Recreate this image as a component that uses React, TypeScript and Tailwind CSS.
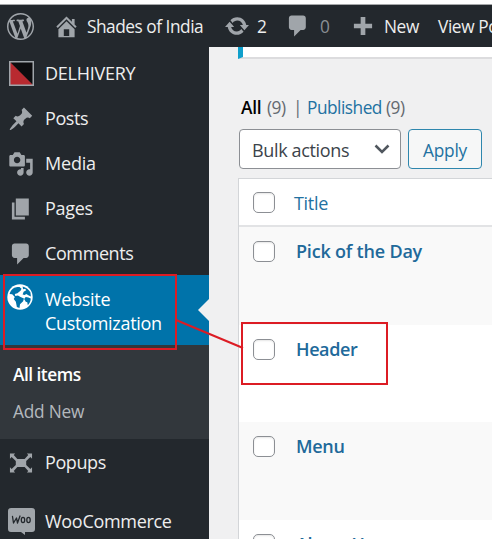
import React from 'react';

const icons = {
  wordpress:
    'M20 10c0-5.51-4.49-10-10-10C4.48 0 0 4.49 0 10c0 5.52 4.48 10 10 10 5.51 0 10-4.48 10-10zM7.78 15.37L4.37 6.22c.55-.02 1.17-.08 1.17-.08.5-.06.44-1.13-.06-1.11 0 0-1.45.11-2.37.11-.18 0-.37 0-.58-.01C4.12 2.69 6.87 1.11 10 1.11c2.33 0 4.45.87 6.05 2.34-.68-.11-1.65.39-1.65 1.58 0 .74.45 1.36.9 2.1.35.61.55 1.36.55 2.46 0 1.49-1.4 5-1.4 5l-3.03-8.37c.54-.02.82-.17.82-.17.5-.05.44-1.25-.06-1.22 0 0-1.44.12-2.38.12-.87 0-2.33-.12-2.33-.12-.5-.03-.56 1.2-.06 1.22l.92.08 1.26 3.41zM17.41 10c.24-.64.74-1.87.43-4.25.7 1.29 1.05 2.71 1.05 4.25 0 3.29-1.73 6.24-4.4 7.78.97-2.59 1.94-5.2 2.92-7.78zM6.1 18.09C3.12 16.65 1.11 13.53 1.11 10c0-1.3.23-2.48.72-3.59C3.25 10.3 4.67 14.2 6.1 18.09zm4.03-6.63l2.58 6.98c-.86.29-1.76.45-2.71.45-.79 0-1.57-.11-2.29-.33.81-2.38 1.62-4.74 2.42-7.1z',
  home: 'M16 8.5l1.53 1.53-1.06 1.06L10 4.6l-6.47 6.49-1.06-1.06L10 2.5l4 4v-2h2v4zm-6-2.46l6 5.99V18H4v-5.97zM12 17v-5H8v5h4z',
  update:
    'M10.2 3.28c3.53 0 6.43 2.61 6.92 6h2.08l-3.5 4-3.5-4h2.32c-.45-1.97-2.21-3.45-4.32-3.45-1.45 0-2.73.71-3.54 1.78L4.95 5.66C6.23 4.2 8.11 3.28 10.2 3.28zm-.4 13.44c-3.52 0-6.43-2.61-6.92-6H.8l3.5-4c1.17 1.33 2.33 2.67 3.5 4H5.48c.45 1.97 2.21 3.45 4.32 3.45 1.45 0 2.73-.71 3.54-1.78l1.71 1.95c-1.28 1.46-3.15 2.38-5.25 2.38z',
  comments: 'M5 2h9c1.1 0 2 .9 2 2v7c0 1.1-.9 2-2 2h-2l-5 5v-5H5c-1.1 0-2-.9-2-2V4c0-1.1.9-2 2-2z',
  plus: 'M8.2 3h3.6v5.2H17v3.6h-5.2V17H8.2v-5.2H3V8.2h5.2z',
  post: 'M10.44 3.02l1.82-1.82 6.36 6.35-1.83 1.82c-1.05-.68-2.48-.57-3.41.36l-.75.75c-.92.93-1.04 2.35-.35 3.41l-1.83 1.82-2.41-2.41-2.8 2.79c-.42.42-3.38 2.71-3.8 2.29s1.86-3.39 2.28-3.81l2.79-2.79L4.1 9.36l1.83-1.82c1.05.69 2.48.57 3.4-.36l.75-.75c.93-.92 1.05-2.35.36-3.41z',
  media:
    'M13 11V4c0-.55-.45-1-1-1h-1.67L9 1H5L3.67 3H2c-.55 0-1 .45-1 1v7c0 .55.45 1 1 1h10c.55 0 1-.45 1-1zM7 4.5c1.38 0 2.5 1.12 2.5 2.5S8.38 9.5 7 9.5 4.5 8.38 4.5 7 5.62 4.5 7 4.5zM14 6h5v10.5c0 1.38-1.12 2.5-2.5 2.5S14 17.88 14 16.5s1.12-2.5 2.5-2.5c.17 0 .34.02.5.05V9h-3V6zm-4 8.05V13h2v3.5c0 1.38-1.12 2.5-2.5 2.5S7 17.88 7 16.5 8.12 14 9.5 14c.17 0 .34.02.5.05z',
  page: 'M6 15V2h10v13H6zm-1 1h8v2H3V5h2v11z',
  popup:
    'M1.500 2.700h4L4.400 3.900 7.200 7h5.600l2.800-3.100L14.500 2.700h4v4l-1.300-1.300L14 8.500v3l3.200 3.100 1.300-1.300v4h-4l1.100-1.200L12.800 13H7.200l-2.800 3.100 1.100 1.200h-4v-4l1.300 1.300L6 11.500v-3L2.800 5.400 1.500 6.700z',
};

function Icon({ name, className = '' }: { name: keyof typeof icons; className?: string }) {
  return (
    <svg viewBox="0 0 20 20" className={`size-[26px] shrink-0 fill-[#a0a5aa] ${className}`}>
      <path d={icons[name]} />
    </svg>
  );
}

function MenuItem({ icon, label, track = '' }: { icon: React.ReactNode; label: string; track?: string }) {
  return (
    <li className="flex h-[45px] items-center">
      <span className="flex w-[45px] shrink-0 pl-[8px]">{icon}</span>
      <span className={track}>{label}</span>
    </li>
  );
}

function Check() {
  return (
    <span className="ml-[14px] block h-[21px] w-[22px] shrink-0 rounded-[5px] border border-[#8c8f94] bg-white shadow-[inset_0_1px_2px_rgba(0,0,0,0.1)]" />
  );
}

function Row({ title, track, alt }: { title: string; track: string; alt?: boolean }) {
  return (
    <div className={`flex h-[97.7px] shrink-0 items-start pt-[14px] ${alt ? 'bg-[#f9f9f9]' : 'bg-white'}`}>
      <Check />
      <span className={`ml-[21px] -mt-[2px] text-[18px] leading-[24px] font-semibold text-[#21699a] ${track}`}>
        {title}
      </span>
    </div>
  );
}

export default function App() {
  return (
    <div className="relative flex h-[539px] w-[492px] flex-col overflow-hidden bg-white pt-[4px] font-['Open_Sans','Noto_Sans',sans-serif] whitespace-nowrap">
      <header className="flex h-[43px] shrink-0 items-center border-t border-[#a5a7a9] bg-[#23282d] text-[17.3px] text-[#eee]">
        <Icon name="wordpress" className="ml-[7px] size-[27px]" />
        <Icon name="home" className="ml-[19px] size-[27px]" />
        <span className="ml-[7px] w-[137px] shrink-0 pt-[1px] tracking-[-0.48px]">Shades of India</span>
        <Icon name="update" />
        <span className="ml-[7px] w-[28px] shrink-0 pt-[1px]">2</span>
        <Icon name="comments" />
        <span className="ml-[9px] w-[30px] shrink-0 pt-[1px] text-[#8a8f94]">0</span>
        <Icon name="plus" />
        <span className="ml-[8px] w-[54px] shrink-0 pt-[1px] tracking-[-0.4px]">New</span>
        <span className="shrink-0 pt-[1px] tracking-[-0.4px]">View Posts</span>
      </header>
      <div className="flex min-h-0 flex-1">
        <nav className="w-[209px] shrink-0 bg-[#23282d] pt-[4px] text-[18px] text-[#eee]">
          <ul>
            <MenuItem
              label="DELHIVERY"
              track="tracking-[-0.25px]"
              icon={
                <svg viewBox="0 0 25 25" className="ml-[1px] size-[25px]">
                  <path d="M0 0h25v25z" fill="#0c0c0e" />
                  <path d="M0 0v25h25z" fill="#b82a30" />
                  <path d="M.75.75h23.5v23.5H.75z" fill="none" stroke="#a0a5aa" strokeWidth="1.5" />
                </svg>
              }
            />
            <MenuItem label="Posts" track="tracking-[-0.4px]" icon={<Icon name="post" />} />
            <MenuItem label="Media" track="tracking-[-0.2px]" icon={<Icon name="media" />} />
            <MenuItem label="Pages" track="tracking-[-0.3px]" icon={<Icon name="page" />} />
            <MenuItem label="Comments" track="tracking-[-0.4px]" icon={<Icon name="comments" />} />
            <li className="-mt-px flex h-[70px] items-start justify-between bg-[#0073aa] text-white">
              <span className="flex">
                <span className="w-[45px] pt-[9px] pl-[7px]">
                  <svg viewBox="0 0 25 25" className="size-[26px]">
                    <circle cx="12.5" cy="12.5" r="12.2" fill="#fff" />
                    <path
                      d="M7 3.500C4.500 5 3 7 2.500 9.500l2.500.3 2.500 2.700-1 2 2 2.500 1 5 2.500 1 .5-3.500 3-3 .8-2.500-3.300-1.500-2.500-1.500-2.500.5-.5-2 2.500-.5 3-2.500 1-2-2-1.500L10 3zM15 2.500l.5 2.500 2-.5 1 1.500-2.500 1.500-1 2.500 2 .5 1.500-1 2.500 1.500 2 1-.5-4C21 5.500 18.500 3.500 15 2.500zM18 12.500l-1.500 2 1.500 2.500 1.500.5.500 3c1.700-1.800 2.700-4 2.900-6.500l-2.400-1z"
                      fill="#0073aa"
                    />
                  </svg>
                </span>
                <span className="pt-[12px] leading-[24px] tracking-[-0.3px]">
                  Website
                  <br />
                  Customization
                </span>
              </span>
              <svg viewBox="0 0 11 22" className="mt-[24px] h-[22px] w-[11px] fill-[#f0f0f1]">
                <path d="M11 0v22L0 11z" />
              </svg>
            </li>
          </ul>
          <ul className="h-[94px] bg-[#32373c] pt-[11px] pl-[13px] text-[17.3px] leading-[37px]">
            <li className="font-semibold tracking-[-0.5px] text-white">All items</li>
            <li className="tracking-[-0.2px] text-[#b4b9be]">Add New</li>
          </ul>
          <ul className="pt-[1px]">
            <MenuItem label="Popups" track="tracking-[-0.4px]" icon={<Icon name="popup" />} />
            <li className="h-[14px]" />
            <MenuItem
              label="WooCommerce"
              track="tracking-[-0.3px]"
              icon={
                <svg viewBox="0 0 27 27" className="size-[27px]">
                  <path d="M3 0h21q3 0 3 3v18q0 3-3 3h-7v3l-4-3H3q-3 0-3-3V3q0-3 3-3z" fill="#a0a5aa" />
                  <g fill="none" stroke="#23282d" strokeWidth="1.3" strokeLinecap="round" strokeLinejoin="round">
                    <path d="M4.500 8.500l1 6.500 3-5 1 5 2.500-7" />
                    <ellipse cx="15" cy="12" rx="1.7" ry="2.6" />
                    <ellipse cx="20.500" cy="12" rx="1.7" ry="2.6" />
                  </g>
                </svg>
              }
            />
          </ul>
        </nav>
        <main className="flex min-w-0 flex-1 flex-col bg-[#f0f0f1] pl-[29px] text-[18px]">
          <div className="h-[12px] shrink-0 border-b-2 border-l-[5px] border-b-[#dcdcde] border-l-[#0f9fcb] bg-white" />
          <div className="mt-[37px] flex h-[24px] shrink-0 items-center pl-[3px] text-[17.3px] text-[#646970]">
            <span className="w-[26px] font-semibold tracking-[-0.2px] text-black">All</span>
            <span className="w-[26px] tracking-[-0.5px]">(9)</span>
            <span className="w-[14px]">|</span>
            <span className="w-[79px] tracking-[-0.5px] text-[#2271a1]">Published</span>
            <span className="tracking-[-0.5px]">(9)</span>
          </div>
          <div className="mt-[9px] flex h-[40px] shrink-0 gap-[7px] pl-[1px]">
            <div className="flex w-[162px] items-center justify-between rounded-[4px] border border-[#8c8f94] bg-white pr-[10px] pl-[12px] text-[#3c434a]">
              <span className="pt-[2px] tracking-[-0.35px]">Bulk actions</span>
              <svg viewBox="0 0 16 10" className="h-[10px] w-[16px]">
                <path d="M1.500 1.500L8 8l6.500-6.500" fill="none" stroke="#50575e" strokeWidth="2.500" />
              </svg>
            </div>
            <div className="flex w-[74px] items-center justify-center rounded-[4px] border border-[#2e86ad] bg-[#f6f7f7] pt-[3px] text-[17.3px] tracking-[-0.2px] text-[#2271a1]">
              Apply
            </div>
          </div>
          <div className="mt-[9px] flex min-h-0 flex-1 flex-col overflow-hidden border-t border-l border-[#d3d5d8]">
            <div className="flex h-[48px] shrink-0 items-center border-b-2 border-[#e2e3e5] bg-white">
              <Check />
              <span className="ml-[19px] pt-[2px] tracking-[-0.3px] text-[#2271a1]">Title</span>
            </div>
            <Row title="Pick of the Day" track="tracking-[-0.2px]" alt />
            <Row title="Header" track="tracking-[-0.4px]" />
            <Row title="Menu" track="tracking-[-0.3px]" alt />
            <Row title="About Us" track="tracking-[-0.3px]" />
          </div>
        </main>
      </div>
      <svg viewBox="0 0 492 539" className="absolute inset-0 h-[539px] w-[492px]" fill="none" stroke="#dc1c24" strokeWidth="2">
        <path d="M4 275h172v74H4zM242 323h145v61H242zM176 320l67 28" />
      </svg>
    </div>
  );
}
